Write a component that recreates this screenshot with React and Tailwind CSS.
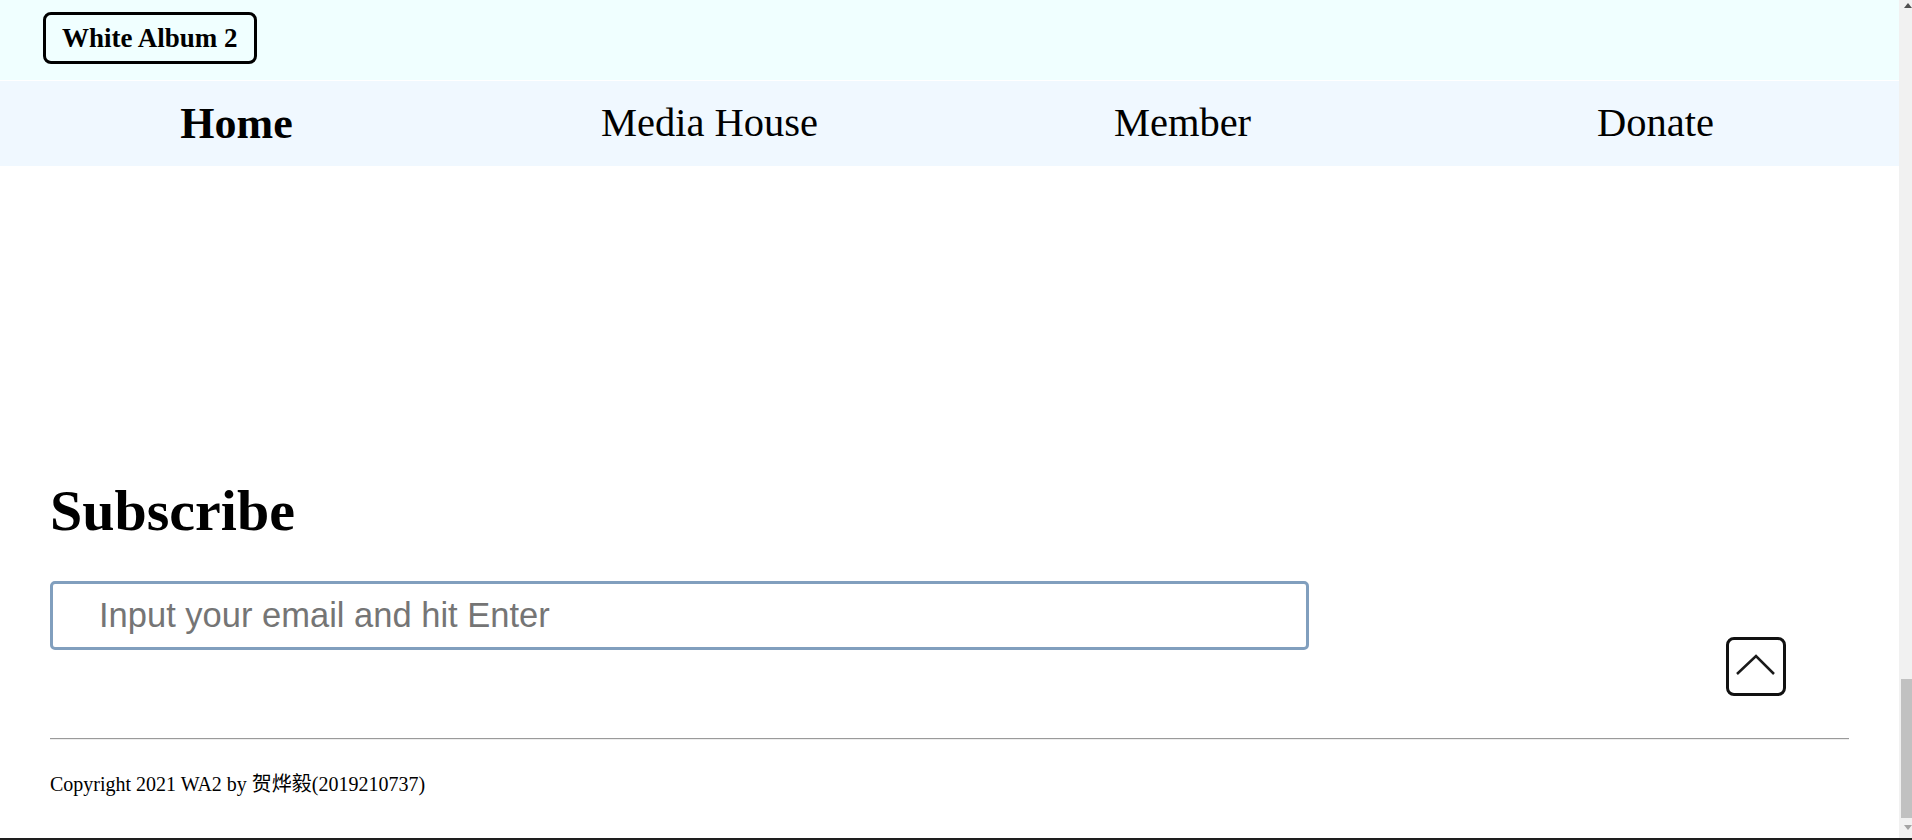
import React from "react";

const navItems = [
  { label: "Home", active: true },
  { label: "Media House" },
  { label: "Member" },
  { label: "Donate" },
];

const Scrollbar = () => (
  <div className="relative w-[13px] bg-[#f1f1f1] overflow-hidden">
    <svg className="absolute left-[5px] top-[3px]" width="8" height="5" viewBox="0 0 8 5">
      <polygon points="0,5 4,0 8,5" fill="#505050" />
    </svg>
    <div className="absolute left-[2px] w-[13px] top-[679px] h-[139px] bg-[#c1c1c1]" />
    <svg className="absolute left-[5px] top-[825px]" width="8" height="5" viewBox="0 0 8 5">
      <polygon points="0,0 8,0 4,5" fill="#a3a3a3" />
    </svg>
  </div>
);

const App = () => {
  return (
    <div className="h-screen flex flex-col overflow-hidden bg-white text-black font-['Liberation_Serif','Times_New_Roman',serif]">
      <div className="flex flex-1 min-h-0">
        <div className="relative flex-1 flex flex-col">
          {/* Top bar */}
          <header className="h-[80px] bg-[#f0ffff] pl-[43px] pt-[12px]">
            <div className="inline-flex items-center h-[52px] px-[16px] border-[3px] border-black rounded-[8px] text-[27px] font-bold leading-none">
              White Album 2
            </div>
          </header>

          {/* Nav */}
          <nav className="h-[86px] bg-[#f0f8ff] border-t border-white pr-[7px] grid grid-cols-4 items-center text-center">
            {navItems.map((item) => (
              <a
                key={item.label}
                href="#"
                className={item.active ? "text-[44px] font-bold leading-none" : "text-[40.5px] leading-none"}
              >
                {item.label}
              </a>
            ))}
          </nav>

          {/* Content */}
          <main className="flex-1 px-[50px] flex flex-col">
            <h2 className="mt-[316px] text-[58px] font-bold leading-none">Subscribe</h2>
            <input
              type="email"
              placeholder="Input your email and hit Enter"
              className="mt-[41px] w-[70%] h-[69px] border-[3px] border-[#819fbe] rounded-[5px] pl-[46px] outline-none text-[34.5px] font-['Liberation_Sans',Arial,sans-serif] placeholder:text-[#757575]"
            />
            <hr className="mt-[88px] h-0 border-t border-b border-t-[#9a9a9a] border-b-[#eeeeee]" />
            <p className="mt-[33px] text-[20px] leading-[23px] font-['Liberation_Serif','Noto_Sans_CJK_SC',serif]">
              Copyright 2021 WA2 by 贺烨毅(2019210737)
            </p>
          </main>

          {/* Back to top */}
          <button className="absolute right-[113px] top-[637px] w-[60px] h-[59px] border-[3px] border-[#111] rounded-[8px] flex items-center justify-center bg-white">
            <svg width="54" height="53" viewBox="0 0 54 53">
              <polyline points="8,34 27,16 45,34" fill="none" stroke="#1a1a1a" strokeWidth="2.5" />
            </svg>
          </button>
        </div>
        <Scrollbar />
      </div>
      <div className="h-[2px] bg-[#1e1e1e]" />
    </div>
  );
};

export default App;
